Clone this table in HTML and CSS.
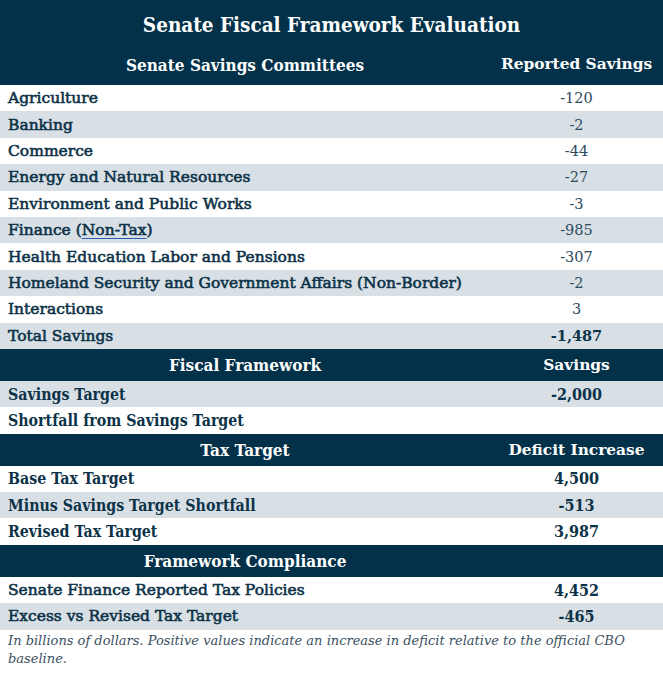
FILE: index.html
```html
<!DOCTYPE html>
<html>
<head>
<meta charset="utf-8">
<link rel="stylesheet" href="styles.css">
</head>
<body>
<div class="wrap">
  <div class="title">Senate Fiscal Framework Evaluation</div>
  <table class="tbl">
    <colgroup><col class="c1"><col class="c2"></colgroup>
    <tr class="head first"><th class="cond">Senate Savings Committees</th><th>Reported Savings</th></tr>
    <tr><td>Agriculture</td><td class="num">-120</td></tr>
    <tr class="alt"><td>Banking</td><td class="num">-2</td></tr>
    <tr><td>Commerce</td><td class="num">-44</td></tr>
    <tr class="alt"><td>Energy and Natural Resources</td><td class="num">-27</td></tr>
    <tr><td>Environment and Public Works</td><td class="num">-3</td></tr>
    <tr class="alt"><td>Finance (<span class="ul">Non-Tax</span>)</td><td class="num">-985</td></tr>
    <tr><td>Health Education Labor and Pensions</td><td class="num">-307</td></tr>
    <tr class="alt"><td>Homeland Security and Government Affairs (Non-Border)</td><td class="num">-2</td></tr>
    <tr><td>Interactions</td><td class="num">3</td></tr>
    <tr class="alt"><td>Total Savings</td><td class="num bold">-1,487</td></tr>
    <tr class="head"><th class="cond">Fiscal Framework</th><th>Savings</th></tr>
    <tr class="alt"><td class="cond">Savings Target</td><td class="num bold cond">-2,000</td></tr>
    <tr><td class="cond">Shortfall from Savings Target</td><td class="num"></td></tr>
    <tr class="head"><th class="cond">Tax Target</th><th>Deficit Increase</th></tr>
    <tr><td class="cond">Base Tax Target</td><td class="num bold cond">4,500</td></tr>
    <tr class="alt"><td class="cond">Minus Savings Target Shortfall</td><td class="num bold cond">-513</td></tr>
    <tr><td class="cond">Revised Tax Target</td><td class="num bold cond">3,987</td></tr>
    <tr class="head"><th class="cond">Framework Compliance</th><th></th></tr>
    <tr><td>Senate Finance Reported Tax Policies</td><td class="num bold cond">4,452</td></tr>
    <tr class="alt"><td>Excess vs Revised Tax Target</td><td class="num bold cond">-465</td></tr>
  </table>
  <p class="note">In billions of dollars. Positive values indicate an increase in deficit relative to the official CBO baseline.</p>
</div>
</body>
</html>
```

FILE: styles.css
```css
html, body {
  margin: 0;
  padding: 0;
  background: #ffffff;
}
.wrap {
  width: 663px;
  font-family: "DejaVu Serif", "Liberation Serif", serif;
  color: #0c3247;
}
.title {
  background: #03314a;
  color: #ffffff;
  font-family: "DejaVu Serif Condensed", "DejaVu Serif", serif;
  font-stretch: condensed;
  font-weight: bold;
  font-size: 20.5px;
  text-align: center;
  height: 54px;
  line-height: 51px;
}
.tbl {
  width: 663px;
  border-collapse: collapse;
  table-layout: fixed;
}
.c1 { width: 490px; }
.c2 { width: 173px; }
.tbl th {
  background: #03314a;
  color: #ffffff;
  font-weight: bold;
  font-size: 15.4px;
  height: 32px;
  padding: 0;
  text-align: center;
  white-space: nowrap;
}
.tbl th.cond {
  font-size: 17px;
}
.tbl tr.first th {
  height: 30px;
  vertical-align: top;
  padding-top: 1px;
}
.tbl td {
  height: 26.4px;
  padding: 0 0 0 8px;
  font-size: 15.5px;
  font-weight: normal;
  -webkit-text-stroke: 0.6px #0c3247;
  white-space: nowrap;
}
.tbl td.cond {
  font-weight: bold;
  font-size: 15.8px;
  -webkit-text-stroke: 0;
}
.tbl tr.alt td { background: #d8e0e6; }
.tbl td.num {
  text-align: center;
  padding: 0;
  font-weight: normal;
  font-size: 14.5px;
  color: #2c4a5c;
  -webkit-text-stroke: 0;
}
.tbl td.num.bold {
  font-weight: bold;
  color: #0c3247;
}
.tbl td.num.bold.cond {
  font-size: 16px;
}
.cond {
  font-family: "DejaVu Serif Condensed", "DejaVu Serif", serif;
  font-stretch: condensed;
}
.ul {
  text-decoration: underline;
  text-decoration-color: #2a5bb0;
  text-underline-offset: 3px;
  -webkit-text-stroke: 0.6px #0c3247;
}
.note {
  margin: 0;
  padding: 2px 8px 0 8px;
  font-style: italic;
  font-size: 13px;
  line-height: 18px;
  color: #3b5060;
}
```
